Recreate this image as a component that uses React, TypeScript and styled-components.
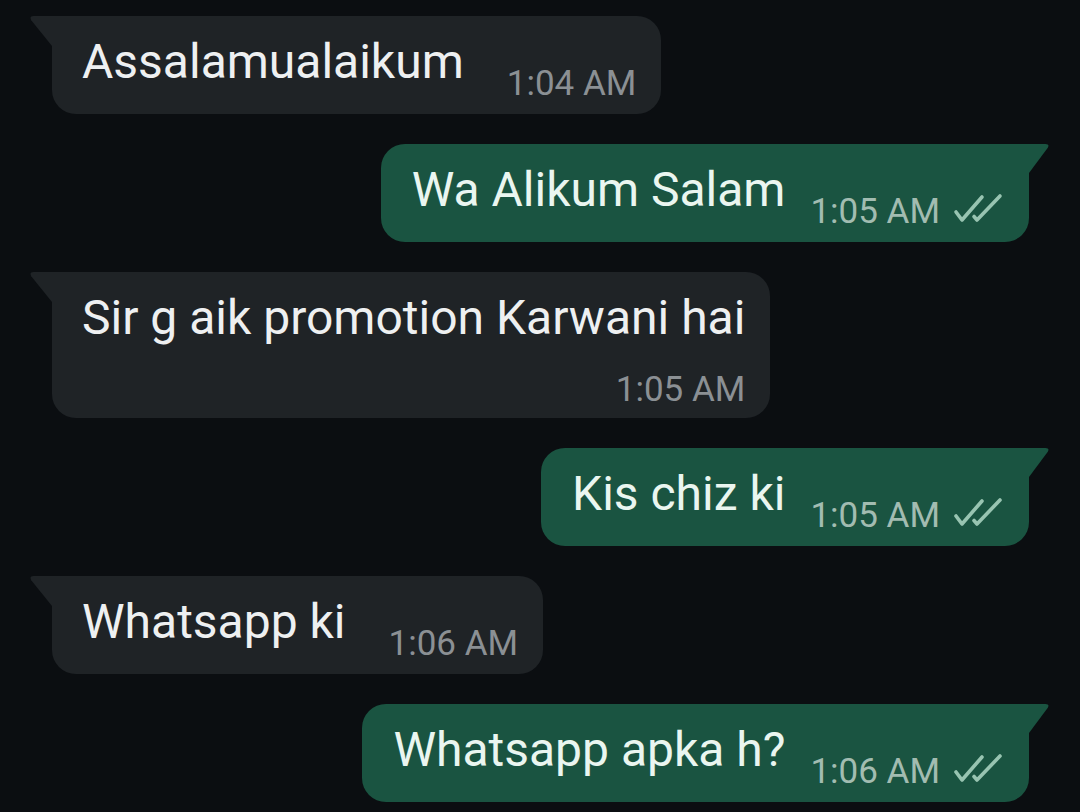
import React from 'react';
import styled, { createGlobalStyle } from 'styled-components';

type Side = 'in' | 'out';

const GlobalStyle = createGlobalStyle`
  html, body {
    margin: 0;
    padding: 0;
    background: #0b0e11;
  }
  body {
    font-family: Roboto, "Noto Sans", "Liberation Sans", sans-serif;
    -webkit-font-smoothing: antialiased;
  }
`;

const Page = styled.main`
  display: flex;
  flex-direction: column;
  gap: 30px;
  padding: 16px 31px 0 30px;
  min-height: 812px;
  box-sizing: border-box;
  background: #0b0e11;
`;

const Row = styled.div<{ $side: Side }>`
  display: flex;
  align-items: flex-start;
  justify-content: ${(p) => (p.$side === 'out' ? 'flex-end' : 'flex-start')};
`;

const TailSvg = styled.svg`
  flex: none;
  display: block;
`;

const Bubble = styled.div<{ $side: Side; $stacked?: boolean }>`
  display: flex;
  flex-direction: ${(p) => (p.$stacked ? 'column' : 'row')};
  align-items: flex-end;
  background: ${(p) => (p.$side === 'out' ? '#1a5441' : '#1f2326')};
  border-radius: ${(p) => (p.$side === 'out' ? '24px 0 24px 24px' : '0 24px 24px 24px')};
  padding: ${(p) =>
    p.$side === 'out'
      ? '18px 26px 10px 31px'
      : p.$stacked
      ? '18px 25px 8px 30px'
      : '18px 25px 10px 30px'};
`;

const Text = styled.span<{ $side: Side; $stacked?: boolean }>`
  font-size: 48px;
  line-height: 56px;
  white-space: nowrap;
  color: ${(p) => (p.$side === 'out' ? '#eaf6f0' : '#eef0f1')};
  margin-bottom: ${(p) => (p.$stacked ? '0' : '14px')};
  align-self: ${(p) => (p.$stacked ? 'flex-start' : 'auto')};
`;

const Meta = styled.span<{ $side: Side; $stacked?: boolean }>`
  display: flex;
  align-items: flex-end;
  gap: 13px;
  font-size: 35px;
  line-height: 40px;
  white-space: nowrap;
  color: ${(p) => (p.$side === 'out' ? '#a2bcb1' : '#8b9094')};
  margin-left: ${(p) => (p.$stacked ? '0' : p.$side === 'out' ? '25px' : '43px')};
  margin-top: ${(p) => (p.$stacked ? '24px' : '0')};
`;

const Ticks = styled.svg`
  display: block;
  flex: none;
  margin-bottom: 8px;
`;

const IncomingTail = () => (
  <TailSvg width="22" height="30" viewBox="0 0 22 30">
    <path d="M3.5 0 H22 V30 L1.2 4.2 Q-0.8 0 3.5 0 Z" fill="#1f2326" />
  </TailSvg>
);

const OutgoingTail = () => (
  <TailSvg width="20" height="29" viewBox="0 0 20 29">
    <path d="M0 0 H16.5 Q20.8 0 18.8 3.8 L0 29 Z" fill="#1a5441" />
  </TailSvg>
);

const DoubleTick = () => (
  <Ticks width="50" height="32" viewBox="0 0 50 32">
    <g fill="none" stroke="#98c4b1" strokeWidth="3.6" strokeLinecap="round" strokeLinejoin="round">
      <path d="M3 20 L9 28 L29 5" />
      <path d="M21 24.5 L24 28 L47 4" />
    </g>
  </Ticks>
);

type Message = { side: Side; text: string; time: string; stacked?: boolean };

const messages: Message[] = [
  { side: 'in', text: 'Assalamualaikum', time: '1:04 AM' },
  { side: 'out', text: 'Wa Alikum Salam', time: '1:05 AM' },
  { side: 'in', text: 'Sir g aik promotion Karwani hai', time: '1:05 AM', stacked: true },
  { side: 'out', text: 'Kis chiz ki', time: '1:05 AM' },
  { side: 'in', text: 'Whatsapp ki', time: '1:06 AM' },
  { side: 'out', text: 'Whatsapp apka h?', time: '1:06 AM' },
];

export default function App() {
  return (
    <>
      <GlobalStyle />
      <Page>
        {messages.map((m, i) => (
          <Row key={i} $side={m.side}>
            {m.side === 'in' && <IncomingTail />}
            <Bubble $side={m.side} $stacked={m.stacked}>
              <Text $side={m.side} $stacked={m.stacked}>
                {m.text}
              </Text>
              <Meta $side={m.side} $stacked={m.stacked}>
                <span>{m.time}</span>
                {m.side === 'out' && <DoubleTick />}
              </Meta>
            </Bubble>
            {m.side === 'out' && <OutgoingTail />}
          </Row>
        ))}
      </Page>
    </>
  );
}
